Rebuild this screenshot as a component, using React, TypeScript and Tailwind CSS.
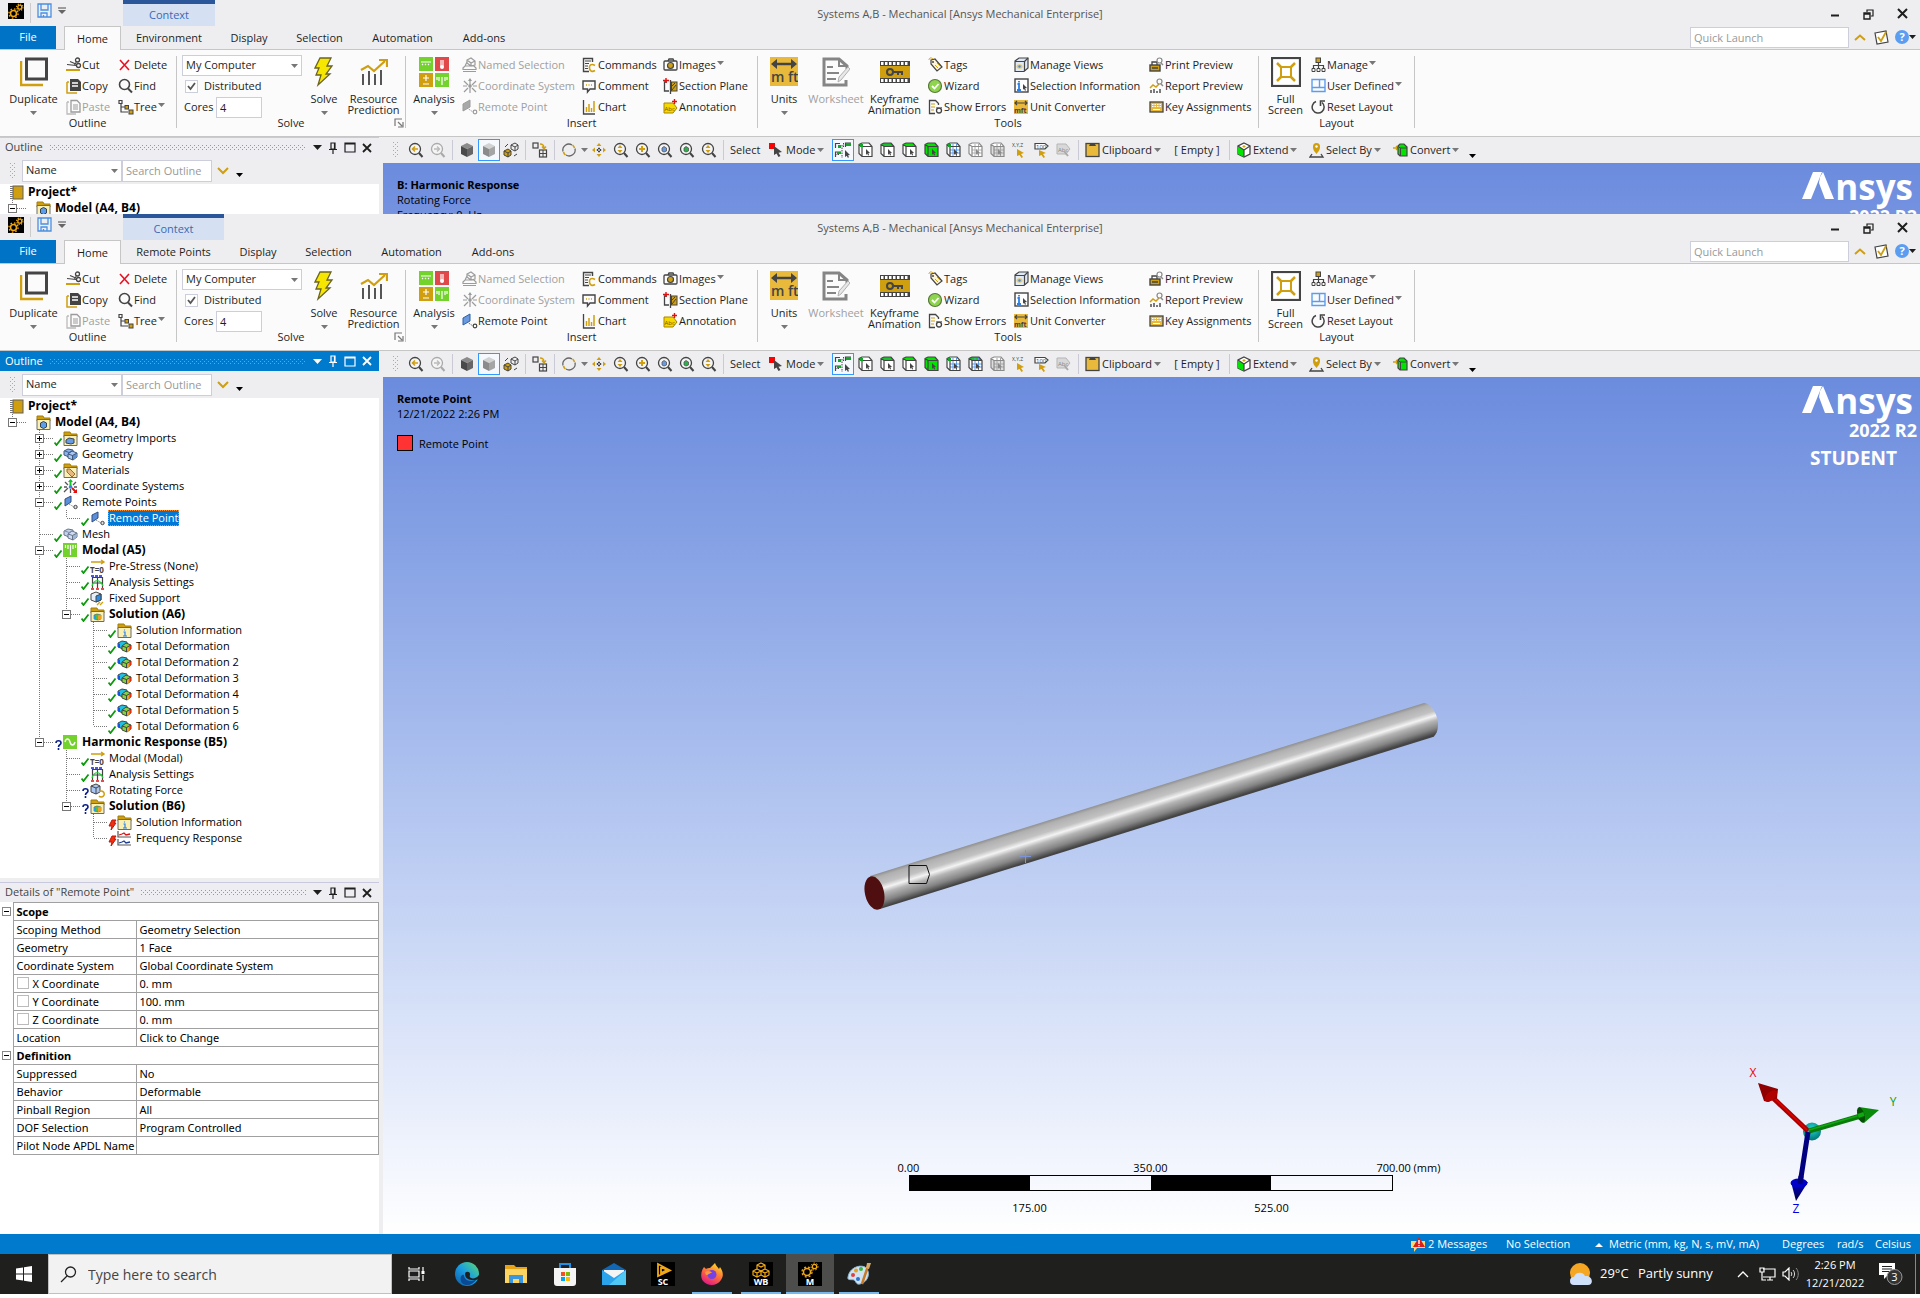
import React from "react";

/* ---------- shared glyphs ---------- */

const K = "#444444";
const G = "#cf9f10";
const D = "#9b9b9b";

type SvgProps = { w?: number; h?: number; vb?: string; className?: string; children: React.ReactNode };

function Svg({ w = 16, h = 16, vb, className = "", children }: SvgProps) {
  return (
    <svg width={w} height={h} viewBox={vb ?? `0 0 ${w} ${h}`} fill="none" aria-hidden="true" className={"shrink-0 " + className}>
      {children}
    </svg>
  );
}

function Caret({ className = "text-[#777]" }: { className?: string }) {
  return (
    <Svg w={7} h={4} className={className}>
      <path d="M0 0h7L3.5 4z" fill="currentColor" />
    </Svg>
  );
}

function Gears({ s = 16 }: { s?: number }) {
  return (
    <Svg w={s} h={s} vb="0 0 16 16">
      <rect width="16" height="16" fill="#000" />
      <circle cx="5.5" cy="10.5" r="3" stroke="#f0a818" strokeWidth="1.6" />
      <circle cx="5.5" cy="10.5" r="4.6" stroke="#f0a818" strokeWidth="1.3" strokeDasharray="1.6 2" />
      <circle cx="11.8" cy="4.2" r="2" stroke="#f0a818" strokeWidth="1.3" />
      <circle cx="11.8" cy="4.2" r="3.2" stroke="#f0a818" strokeWidth="1.1" strokeDasharray="1.2 1.3" />
    </Svg>
  );
}

/* ---------- ribbon icons ---------- */

const ic = {
  cut: (
    <Svg>
      <path d="M0 13h14" stroke={G} strokeWidth="2" />
      <path d="M1 7.500l9 1M4 4.500l7 3" stroke={K} strokeWidth="1.200" />
      <circle cx="11.500" cy="3" r="2" stroke={K} strokeWidth="1.300" />
      <circle cx="12.500" cy="8.500" r="2" stroke={K} strokeWidth="1.300" />
      <path d="M8.500 8l2-3.500" stroke={K} />
    </Svg>
  ),
  copy: (
    <Svg>
      <path d="M1 4v11h10M1 4h2" stroke={G} strokeWidth="1.5" />
      <path d="M5 1h7l3 3v9H4V1z" fill={K} />
      <path d="M6 5h6M6 8h6" stroke="#fff" strokeWidth="1.4" />
    </Svg>
  ),
  paste: (
    <Svg>
      <path d="M1 3v12h9M1 3h2" stroke="#bbb" strokeWidth="1.3" />
      <path d="M5 1.5h6l3 3V13H5z" stroke={D} strokeWidth="1.3" />
      <path d="M7 6h5M7 8h5M7 10h5" stroke={D} />
    </Svg>
  ),
  del: (
    <Svg w={14} h={14}>
      <path d="M2 2l9 10M11 2L2 12" stroke="#e81123" strokeWidth="1.6" />
    </Svg>
  ),
  find: (
    <Svg>
      <circle cx="6.500" cy="6.500" r="5" stroke={K} strokeWidth="1.6" />
      <path d="M10 10.500l4 4" stroke={K} strokeWidth="2" />
    </Svg>
  ),
  tree: (
    <Svg>
      <path d="M1 1.500h3v3H1zM3 5v3h4M3 8v5h7" stroke={K} strokeWidth="1.2" />
      <rect x="7" y="6.500" width="3.500" height="3.500" fill={G} stroke={K} />
      <rect x="11" y="11" width="4" height="4" fill={G} stroke={K} />
    </Svg>
  ),
  namedSel: (
    <Svg>
      <path d="M1 14.500h13M1 11l2-2h9l2 2v1.500H1zM3 9l2-4M5 3l4-2 4 3v4l-4 1-4-3zM5 3l4 3 4-2M9 6v3" stroke={D} strokeWidth="1.2" />
    </Svg>
  ),
  coord: (
    <Svg>
      <path d="M8 1v6M8 9v6M2 3l4 4M14 3l-4 4M2 14l4-4M14 14l-4-4M1 8h4M11 8h4" stroke={D} strokeWidth="1.2" />
      <circle cx="8" cy="8" r="1.800" fill={D} />
      <path d="M6 3l2-3 2 3z" fill={D} />
    </Svg>
  ),
  remoteOff: (
    <Svg>
      <path d="M1 5l7-4v7l-7 4z" fill="#a8a8a8" stroke={D} />
      <path d="M5 9l6 4" stroke={D} strokeDasharray="1.500 1" />
      <circle cx="13" cy="13" r="1.800" stroke={D} strokeWidth="1.200" />
    </Svg>
  ),
  remote: (
    <Svg>
      <path d="M1 5l7-4v7l-7 4z" fill="#6a9be0" stroke="#2f5fa5" />
      <path d="M5 9l6 4" stroke="#666" strokeDasharray="1.500 1" />
      <circle cx="13" cy="13" r="1.800" stroke={K} strokeWidth="1.200" />
    </Svg>
  ),
  commands: (
    <Svg>
      <path d="M7 14.500H1.500v-13h9V5" stroke={K} strokeWidth="1.400" />
      <path d="M3 4h6M3 6.500h4M3 9h3M3 11.500h3" stroke={K} />
      <path d="M13 8.500c-4-2.500-6 0-5.500 3s3 3.500 5.500 2" stroke={G} strokeWidth="1.600" />
    </Svg>
  ),
  comment: (
    <Svg>
      <path d="M1 3h12v8H8L5.500 14v-3H1z" stroke={K} strokeWidth="1.400" />
      <path d="M4 7h1M6.500 7h1M9 7h1" stroke={G} strokeWidth="1.500" />
    </Svg>
  ),
  chart: (
    <Svg>
      <path d="M1.500 1v14H13" stroke={K} strokeWidth="1.300" />
      <path d="M4.500 13V8M7 13V5M9.500 13V9M12 13V2" stroke={G} strokeWidth="1.500" />
    </Svg>
  ),
  images: (
    <Svg>
      <rect x="1" y="4" width="13" height="9" rx="1" stroke={K} strokeWidth="1.300" />
      <path d="M5 4l1-2h4l1 2" stroke={K} strokeWidth="1.300" />
      <circle cx="7.500" cy="8.500" r="3" fill={G} stroke={K} strokeWidth="1.200" />
    </Svg>
  ),
  section: (
    <Svg>
      <path d="M4 4H1.500v9H6M7.500 2v14" stroke={K} strokeWidth="1.300" />
      <rect x="8.500" y="4" width="5.500" height="9" fill={G} stroke={K} />
      <path d="M9 12l4-5M9 8l3-3" stroke={K} />
      <path d="M3 0v5M0 2.500h6" stroke="#e01010" strokeWidth="1.400" />
    </Svg>
  ),
  annotation: (
    <Svg>
      <path d="M1 4h9l4 5-4 5H1z" fill="#f5d800" stroke="#a88400" />
      <text x="1.500" y="12" fontSize="6" fontFamily="Open Sans, sans-serif" fill="#6b5600">Abc</text>
      <path d="M11.500 0v5M9 2.500h5" stroke="#e01010" strokeWidth="1.400" />
    </Svg>
  ),
  tags: (
    <Svg>
      <path d="M3 3l4-1 7 8-5 4-6-7z" fill="#fdf3d8" stroke={K} strokeWidth="1.200" />
      <circle cx="5" cy="5" r="1" fill={K} />
      <path d="M1 3c0-2 2-3 4-1M7 8l3 3M9 6l3 3" stroke={G} />
    </Svg>
  ),
  wizard: (
    <Svg>
      <circle cx="7" cy="8" r="6.500" fill="#8fd44f" stroke="#5a7a3a" strokeWidth="1.200" />
      <path d="M4 8l2.500 2.500L10.500 6" stroke="#fff" strokeWidth="1.800" />
    </Svg>
  ),
  errors: (
    <Svg>
      <path d="M7 14.500H1.500v-13h6l3 3V6" stroke={K} strokeWidth="1.300" />
      <path d="M3 5h4M3 8h4M3 11h3" stroke={G} strokeWidth="1.200" />
      <circle cx="11" cy="11.500" r="2.500" stroke={K} strokeWidth="1.300" />
      <path d="M8.500 8l1.500 1.500M13.500 8l-1 1.500" stroke={K} />
    </Svg>
  ),
  views: (
    <Svg>
      <path d="M1 4l4-3h9v10l-4 3.500H1z" fill="#dfe9f7" stroke={K} strokeWidth="1.200" />
      <path d="M1 4.500h9.500V14M10.500 4.500L14 1" stroke={K} strokeWidth="1.200" />
      <ellipse cx="5.500" cy="9.500" rx="3" ry="2.200" fill="#efc85a" />
      <circle cx="5.500" cy="9.500" r="1.200" fill="#4a8be0" />
    </Svg>
  ),
  selInfo: (
    <Svg>
      <rect x="1" y="1" width="13" height="13" fill="#fff" stroke={K} strokeWidth="1.400" />
      <path d="M5 3v1.500M3.500 6H5v6M3 12h4" stroke="#2a80e8" strokeWidth="1.800" />
      <path d="M9 6l4 4-2 .3 1 2-1 .4-1-2-1 1z" fill={K} />
    </Svg>
  ),
  unitConv: (
    <Svg>
      <rect x="0" y="1" width="14" height="14" fill="#e8b93a" />
      <path d="M1 4h12M3 2L1 4l2 2M11 2l2 2-2 2" stroke={K} strokeWidth="1.200" />
      <text x="0" y="14" fontSize="7" fontWeight="bold" fontFamily="Open Sans, sans-serif" fill={K}>mft</text>
    </Svg>
  ),
  print: (
    <Svg>
      <path d="M3 8V5h5v3" fill="#fff" stroke={K} strokeWidth="1.300" />
      <rect x="1" y="8" width="10" height="6" fill={G} stroke={K} strokeWidth="1.400" />
      <path d="M3 11h6" stroke={K} strokeWidth="1.500" />
      <circle cx="10.500" cy="3.500" r="2.500" fill="#fff" stroke="#888" strokeWidth="1.200" />
      <path d="M12 6l2 2" stroke="#888" strokeWidth="1.400" />
    </Svg>
  ),
  report: (
    <Svg>
      <path d="M2 15v-3M5 15v-4M8 15v-2M11 15v-4" stroke={K} strokeWidth="1.400" />
      <path d="M1 10l3-3 3 2 3-3" stroke={G} strokeWidth="1.500" />
      <circle cx="10.500" cy="3.500" r="2.500" stroke="#888" strokeWidth="1.200" />
      <path d="M12 6l2 2" stroke="#888" strokeWidth="1.400" />
    </Svg>
  ),
  keys: (
    <Svg>
      <rect x="1" y="3" width="13" height="10" fill="#e8b93a" stroke={K} strokeWidth="1.300" />
      <path d="M3 5.500h9M3 7.500h9" stroke="#fff" strokeDasharray="1.500 1" />
      <path d="M4 10.500h7" stroke="#fff" />
    </Svg>
  ),
  manage: (
    <Svg>
      <rect x="5" y="1" width="4.500" height="4.500" fill={G} stroke={K} />
      <path d="M7.500 6v5M2.500 11V8.500h10V11" stroke={K} strokeWidth="1.200" />
      <path d="M1 11.500h3v3H1zM6 11.500h3v3H6zM11 11.500h3v3h-3z" stroke={K} />
    </Svg>
  ),
  userDef: (
    <Svg>
      <path d="M1 1.500h13v12H1zM1 9.500h13M8.500 1.500v8" stroke="#5b9df0" strokeWidth="1.400" />
    </Svg>
  ),
  reset: (
    <Svg>
      <path d="M5 2.500A6 6 0 1 0 11 3.500" stroke={K} strokeWidth="1.500" />
      <path d="M14 2H9.500V7" stroke={K} strokeWidth="1.600" />
    </Svg>
  ),
};

const big = {
  duplicate: (
    <Svg w={28} h={30}>
      <path d="M1 4v24h22" stroke={G} strokeWidth="2.500" />
      <rect x="6.500" y="2" width="20" height="20" stroke={K} strokeWidth="3" />
    </Svg>
  ),
  solve: (
    <Svg w={20} h={30}>
      <path d="M6 1h11l-4 8h5l-6 8h4L4 28l3-10H2l3-7H1z" fill="#f7e600" stroke="#6b6420" strokeWidth="1.300" />
    </Svg>
  ),
  resource: (
    <Svg w={28} h={30}>
      <path d="M3 17v11M9 14v14M15 17v11M21 13v15" stroke={K} strokeWidth="1.800" />
      <path d="M1 13l7-4 6 5 11-10" stroke={G} strokeWidth="2.200" />
      <path d="M19 3h8v7" stroke={G} strokeWidth="2.200" />
    </Svg>
  ),
  analysis: (
    <Svg w={30} h={30}>
      <rect width="14" height="14" fill="#74d22c" />
      <rect x="16" width="14" height="14" fill="#e0484a" />
      <rect y="16" width="14" height="14" fill="#cf9f10" />
      <rect x="16" y="16" width="14" height="14" fill="#74d22c" />
      <path d="M2 5h10M3 7l1 1M6 7l1 1M9 7l1 1M22 3v7M24 3v7M20 20v4M18 20v3M23 20v8M26 20v4M28 20v3M4 21h6M7 18v6M4 27h6" stroke="#fff" strokeWidth="1.200" />
      <circle cx="23" cy="10" r="2" fill="#fff" />
    </Svg>
  ),
  units: (
    <Svg w={28} h={30}>
      <rect width="28" height="29" fill="#e8b93a" />
      <path d="M3 7h22" stroke={K} strokeWidth="2.500" />
      <path d="M1 7l6-5v10zM27 7l-6-5v10z" fill={K} />
      <text x="1" y="25" fontSize="14" fontWeight="600" fontFamily="Open Sans, sans-serif" fill={K}>m ft</text>
    </Svg>
  ),
  worksheet: (
    <Svg w={28} h={30}>
      <path d="M25 12V9l-8-7H2v26h22v-5" stroke="#858585" strokeWidth="3" />
      <path d="M17 2v7h8M5 10h6M5 16h12M5 22h9" stroke="#858585" strokeWidth="2" />
      <path d="M16 25l1-5 9-10 2 2-9 11z" fill="#e8e8e8" stroke="#b0b0b0" />
    </Svg>
  ),
  keyframe: (
    <Svg w={30} h={30}>
      <rect y="4" width="30" height="22" fill={K} />
      <rect x="0" y="9" width="30" height="12" fill={G} />
      <path d="M1 6.500h28M1 23.500h28" stroke="#fff" strokeWidth="3" strokeDasharray="2.500 1.500" />
      <circle cx="10" cy="15" r="3" stroke={K} strokeWidth="2" />
      <path d="M13 15h10M18 15v3M22 15v3" stroke={K} strokeWidth="2" />
    </Svg>
  ),
  full: (
    <Svg w={30} h={30}>
      <rect x="1" y="1" width="28" height="28" fill="#fff" stroke={K} strokeWidth="2.200" />
      <rect x="10" y="10" width="10" height="10" stroke={G} strokeWidth="2" />
      <path d="M6 6l5 5M24 6l-5 5M6 24l5-5M24 24l-5-5" stroke={G} strokeWidth="2.500" />
    </Svg>
  ),
};

/* ---------- graphics toolbar icons ---------- */

function Lens({ c = K, children }: { c?: string; children?: React.ReactNode }) {
  return (
    <Svg>
      <circle cx="7" cy="7" r="5.500" fill="#f5f5f5" stroke={c} strokeWidth="1.300" />
      <path d="M11 11l3.500 4" stroke={c} strokeWidth="2" />
      {children}
    </Svg>
  );
}

function Box3({ top = "#fff", front = "#fff", c = K, dot, mesh }: { top?: string; front?: string; c?: string; dot?: boolean; mesh?: string }) {
  return (
    <Svg>
      <path d="M1 2.500L4 1h7l3 3.500-10 0z" fill={top} />
      <path d="M4 4.500h10v10H4z" fill={front} />
      <path d="M1 2.500l3 2v10l-3-3z" fill={front} />
      {mesh && <path d="M7 2v13M10.500 2v13M4 8h10M4 11h10" stroke={mesh} />}
      <path d="M1 2.500L4 1h7l3 3.500v10H4l-3-3zM1 2.500l3 2h10M4 4.500v10" stroke={c} strokeWidth="1.200" />
      {dot && <path d="M2 2h3v3H2z" fill="#17a32b" />}
      <path d="M8 7l4 4-1.700.2.800 1.800-1 .5-.9-1.900L8 13z" fill={c} />
    </Svg>
  );
}

function SolidCube({ a, b, c }: { a: string; b: string; c: string }) {
  return (
    <Svg>
      <path d="M8 1l6 3-6 3-6-3z" fill={a} />
      <path d="M2 4l6 3v8l-6-3z" fill={b} />
      <path d="M14 4l-6 3v8l6-3z" fill={c} />
    </Svg>
  );
}

const tb = {
  back: <Lens><path d="M10 7H5M7 4.500L4.500 7 7 9.500" stroke={G} strokeWidth="1.600" /></Lens>,
  fwd: <Lens c="#aaa"><path d="M4 7h5M7 4.500L9.500 7 7 9.500" stroke="#bbb" strokeWidth="1.400" /></Lens>,
  cubeEdge: <SolidCube a="#8b8b8b" b="#4a4a4a" c="#666" />,
  cube: <SolidCube a="#d2d2d2" b="#8b8b8b" c="#a5a5a5" />,
  swap: (
    <Svg>
      <path d="M8 3l4-2 3 2v4l-3 2-4-2zM8 3l4 2 3-2M12 5v4" stroke={K} />
      <path d="M1 9l4-2 3 2v4l-3 2-4-2z" fill={G} stroke={K} />
      <path d="M1 9l4 2 3-2M5 11v4M2 5l3-3M11 14l3-2" stroke={K} />
    </Svg>
  ),
  viewports: (
    <Svg>
      <rect x="1" y="1" width="5" height="5" stroke={K} strokeWidth="1.200" />
      <rect x="7.500" y="8" width="7" height="7" stroke={K} strokeWidth="1.200" />
      <path d="M11 8v7M7.500 11.500h7" stroke={K} />
      <path d="M8 2c3 0 4 1 4 4M10 4.500L12 7l2-2.500" stroke={G} strokeWidth="1.300" />
    </Svg>
  ),
  rotate: (
    <Svg>
      <path d="M2 9.500a6 6 0 0 1 9-6.500M14 6.500a6 6 0 0 1-9 6.500" stroke="#666" strokeWidth="1.300" />
      <path d="M11.500 3a6 6 0 0 1 2 3M2.500 10a6 6 0 0 0 2 3" stroke={G} strokeWidth="1.600" />
    </Svg>
  ),
  pan: (
    <Svg>
      <path d="M8 1l2.500 3h-5zM8 15l2.500-3h-5zM1 8l3-2.500v5zM15 8l-3-2.500v5z" fill={G} />
      <path d="M7 6.500h2M7 9.500h2M6.500 7v2M9.500 7v2" stroke={K} strokeWidth="1.400" />
    </Svg>
  ),
  zoom: <Lens><path d="M4.500 6L7 3l2.500 3zM4.500 8L7 11l2.500-3z" fill={G} /></Lens>,
  zoomIn: <Lens><path d="M7 4v6M4 7h6" stroke={G} strokeWidth="2" /></Lens>,
  fit: <Lens><path d="M5 6l2-1.500L9.500 6v3L7 10 5 9z" fill="#6a9be0" stroke="#555" strokeWidth=".8" /></Lens>,
  fitSel: <Lens><path d="M5 6l2-1.500L9.500 6v3L7 10 5 9z" fill="#2bb14a" stroke="#555" strokeWidth=".8" /></Lens>,
  mode: (
    <Svg>
      <rect x="0" y="1" width="6" height="6" fill="#f00" />
      <path d="M5 4l8 6-3.500.7 2 3.300-2 1-2-3.500L5 13z" fill={K} />
    </Svg>
  ),
  smart: (
    <Svg w={18} h={18}>
      <path d="M1.500 7V2.500H6M11.500 6V2H17M1.500 16V11H7" stroke={K} strokeWidth="1.200" />
      <path d="M4 4h3v3H4zM12 2h5v3h-5zM3 11h4v2H3z" fill="#17a32b" />
      <path d="M9.500 2v5M1 13.500h5M8 4v13" stroke={K} strokeDasharray="1.500 1" />
      <path d="M11 9l5 5-2 .2 1 2-1.200.6-1-2-1.800 1.200z" fill={K} />
    </Svg>
  ),
  xyz: (
    <Svg>
      <text x="0" y="5" fontSize="5" fontFamily="Open Sans, sans-serif" fill={K}>X,Y,Z</text>
      <path d="M5 7l7 4-3 1 2 3-1.500 1-2-3L5 14z" fill={G} />
    </Svg>
  ),
  id100: (
    <Svg>
      <path d="M1 1.500h10l3 2.500-3 3H1z" fill="#fff" stroke={K} strokeWidth="1.200" />
      <text x="2" y="6.500" fontSize="6" fontFamily="Open Sans, sans-serif" fill={K}>100</text>
      <path d="M5 8l7 3-3 1 2 3-1.500 1-2-3L5 14z" fill={G} />
    </Svg>
  ),
  abcOff: (
    <Svg>
      <path d="M1 2h9l4 5-4 5H1z" fill="#d8d8d8" stroke="#b5b5b5" />
      <text x="2" y="9.500" fontSize="6" fontFamily="Open Sans, sans-serif" fill="#888">Abc</text>
      <path d="M8 9l4 5" stroke="#aaa" strokeWidth="2" />
    </Svg>
  ),
  clipboard: (
    <Svg>
      <rect x="1" y="1.500" width="13" height="13" fill="#e8b93a" stroke={K} strokeWidth="1.300" />
      <path d="M4 4l1.500-3h4L11 4z" fill={K} />
    </Svg>
  ),
  extend: (
    <Svg>
      <path d="M8 1l6 3v8l-6 3-6-3V4z" fill="#fff" stroke={K} strokeWidth="1.300" />
      <path d="M2 4.500L8 8v7l-6-3z" fill="#00e400" />
      <path d="M2 4l6 4 6-4M8 8v7" stroke={K} strokeWidth="1.200" />
      <path d="M8 3v3M6.500 4.500h3" stroke={G} />
    </Svg>
  ),
  selectBy: (
    <Svg>
      <path d="M7.500 12C4 8 4 6.500 4 4.500a3.500 3.500 0 0 1 7 0c0 2 0 3.500-3.500 7.500z" fill={G} />
      <circle cx="7.500" cy="4.500" r="1.200" fill="#fff" />
      <path d="M3 12l-2 3h13l-2-3" stroke={K} strokeWidth="1.300" />
    </Svg>
  ),
  convert: (
    <Svg>
      <path d="M0 6h4M3 4l2 2-2 2" stroke={G} strokeWidth="1.300" />
      <path d="M5 4l2-2h4l3 3v9H7l-2-2z" fill="#00e400" stroke={K} strokeWidth="1.200" />
      <path d="M5 4l2 2h7M7.500 6v8" stroke={K} />
    </Svg>
  ),
};

/* ---------- tree icons ---------- */

function Folder({ children }: { children: React.ReactNode }) {
  return (
    <Svg w={15} h={15}>
      <path d="M1 3V1h6l1 2h6v3H1z" fill={G} stroke="#a07c10" />
      <path d="M1 4.500h13v10H1z" fill="#fbf0b4" stroke="#6b6b6b" />
      {children}
    </Svg>
  );
}

function Blocks({ a, b, c, d, s = K }: { a: string; b: string; c: string; d: string; s?: string }) {
  return (
    <Svg w={15} h={15}>
      <path d="M1 4l4-2 5 1v4l-4 3-5-2z" fill={a} stroke={s} />
      <path d="M5 7l4-3 5 2v4l-4 3-5-2z" fill={b} stroke={s} />
      <path d="M9.500 8.500l4-2.500v4l-4 3z" fill={c} />
      <path d="M2 4l4 1.500L9 4" stroke={d} />
      <path d="M5 7l4.500 1.500L14 6M9.500 8.500V13" stroke={s} />
    </Svg>
  );
}

const ti: Record<string, React.ReactNode> = {
  project: (
    <Svg w={15} h={15}>
      <rect x="4" y="1" width="10" height="13" fill={G} stroke="#5f5f5f" />
      <path d="M2.500 1v13" stroke="#777" strokeWidth="3" strokeDasharray="1 1" />
    </Svg>
  ),
  model: <Folder><path d="M4.500 8l3-1.500 3 1.500v4l-3 1.500-3-1.500z" fill="#5b9df0" stroke="#345" /></Folder>,
  imports: <Folder><path d="M3 9l3-2 5 1v4l-3 1-5-1z" fill="#6a9be0" stroke="#345" /></Folder>,
  geometry: <Blocks a="#8db4ea" b="#a9c7f2" c="#5b8fd8" d="#345f9a" s="#3d5878" />,
  materials: <Folder><path d="M4 6l3 0 5 5-3 3-5-5z" fill="#e6b980" stroke="#a06a2a" /></Folder>,
  coords: (
    <Svg w={15} h={15}>
      <path d="M7.500 7V1" stroke="#17c32b" strokeWidth="2" />
      <path d="M5 3l2.500-3L10 3z" fill="#17c32b" />
      <path d="M9 9l4 4" stroke="#e01010" strokeWidth="2" />
      <path d="M14 14v-4l-4 4z" fill="#e01010" />
      <path d="M5 9l-4 4M2 3l3 3M13 3l-3 3M7.500 10v4M1 8h3M11 8h3" stroke="#555" strokeWidth="1.300" />
      <circle cx="7.500" cy="8" r="1.800" fill="#3b82e8" />
    </Svg>
  ),
  remote: (
    <Svg w={15} h={15}>
      <path d="M2 4l6-3v6l-6 4z" fill="#5b8fd8" stroke="#2f4f85" />
      <path d="M6 9l5 3" stroke="#777" strokeDasharray="1 1" />
      <circle cx="12.500" cy="12" r="1.700" fill="#ddd" stroke={K} />
    </Svg>
  ),
  mesh: <Blocks a="#c4d3ea" b="#cfdcf0" c="#9fb6d8" d="#7d8fae" s="#66758c" />,
  modal: (
    <Svg w={15} h={15}>
      <rect width="14" height="14" fill="#74d22c" />
      <path d="M2.500 2v3M5 2v4M7.500 2v10M10 2v4M12.500 2v3" stroke="#fff" strokeWidth="1.200" />
    </Svg>
  ),
  t0: (
    <Svg w={16} h={15}>
      <path d="M1 3h12M11 1l3 2-3 2" stroke={G} strokeWidth="1.400" />
      <text x="0" y="14" fontSize="8" fontWeight="bold" fontFamily="Open Sans, sans-serif" fill={K}>T=0</text>
    </Svg>
  ),
  settings: (
    <Svg w={16} h={15}>
      <path d="M2.500 2v11M7.500 2v11M12.500 2v11M2 2.500h11M2 8h11" stroke={K} strokeWidth="1.200" />
      <path d="M2 11c2-7 8-7 11 0" stroke="#17d32b" strokeWidth="1.200" />
      <path d="M1 1h12" stroke="#1020e0" strokeWidth="1.600" strokeDasharray="3 1" />
      <path d="M1 14h13" stroke="#e01010" strokeWidth="1.600" strokeDasharray="3 2" />
    </Svg>
  ),
  support: (
    <Svg w={15} h={15}>
      <path d="M1 3l5-2 5 2v6l-5 2-5-2z" fill="#e8eef8" stroke={K} />
      <path d="M6 5l5-2v6l-5 2z" fill="#2a8be8" stroke={K} />
      <path d="M7 14l3-3M10 14l3-3" stroke={G} strokeWidth="1.300" />
    </Svg>
  ),
  solution: (
    <Folder>
      <path d="M4 8l3-1 4 1v4l-3 1-4-1z" fill="#4ec04a" stroke="#555" strokeWidth=".6" />
      <path d="M8 8.500l3-.5v4l-3 1z" fill="#f0a020" />
      <path d="M4 8.500h2v3.500H4z" fill="#2a9be8" />
    </Folder>
  ),
  info: <Folder><path d="M7.500 6.500v1M6.500 9h1.500v4M6 13h4" stroke="#2a80e8" strokeWidth="1.200" /></Folder>,
  deform: (
    <Svg w={15} h={15}>
      <path d="M1 4l4-2 5 1v4l-4 3-5-2z" fill="#22c0e0" stroke={K} />
      <path d="M1 4l2 1v4l-2-1z" fill="#2050e0" />
      <path d="M5 7l4-3 5 2v4l-4 3-5-2z" fill="#7ed63a" stroke={K} />
      <path d="M10 8.500L14 6v4l-4 3z" fill="#f0a020" />
      <path d="M12.500 7L14 6v4l-1.500 1z" fill="#e03010" />
      <path d="M5 7l4.500 1.500L14 6M9.500 8.500V13" stroke={K} />
    </Svg>
  ),
  harmonic: (
    <Svg w={15} h={15}>
      <rect width="14" height="14" fill="#74d22c" />
      <path d="M2 7c1-4 4-4 5 0s4 4 5 0" stroke="#fff" strokeWidth="1.400" />
    </Svg>
  ),
  rotating: (
    <Svg w={15} h={15}>
      <path d="M1 3l5-2 4 2v6l-4 2-5-2z" fill="#a9c7f2" stroke={K} />
      <path d="M1 3l5 2 4-2M6 5v6" stroke={K} />
      <path d="M9 9a3 3 0 1 1 0 4" stroke={G} strokeWidth="1.500" />
    </Svg>
  ),
  freq: (
    <Svg w={15} h={15}>
      <path d="M1 0v6h13M1 8v6h13" stroke="#555" strokeWidth="1.200" />
      <path d="M2 4l3-1 2-1 2 2 4-1" stroke="#e01010" strokeWidth="1.300" />
      <path d="M2 12l3-1 2-1 2 2 4-1" stroke="#1b3f9a" strokeWidth="1.300" />
    </Svg>
  ),
};

const marks: Record<string, React.ReactNode> = {
  ok: <Svg w={9} h={16}><path d="M0.500 12.500l2 2.500L7.500 8.500" stroke="#0a9a0a" strokeWidth="1.800" /></Svg>,
  q: <Svg w={9} h={16}><path d="M2 9c0-3 5-3 5 0 0 2-2.500 1.500-2.500 4M4.500 14v2" stroke="#0b1f8c" strokeWidth="1.600" /></Svg>,
  bolt: <Svg w={9} h={16}><path d="M4 6h4L6 9h2l-5 7 1-4H1z" fill="#f03010" stroke="#c01808" /></Svg>,
  none: <span className="w-[9px] shrink-0" />,
};

/* ---------- outline tree ---------- */

type Node = { d: number; label: string; icon: string; mark?: string; box?: "+" | "-"; bold?: boolean; sel?: boolean; g: string };

/* g holds one character per column: "|" passes through, "T" branches, "L" ends, "." is blank */
const nodes: Node[] = [
  { d: -1, label: "Project*", icon: "project", bold: true, g: "" },
  { d: 0, label: "Model (A4, B4)", icon: "model", box: "-", bold: true, g: "L" },
  { d: 1, label: "Geometry Imports", icon: "imports", mark: "ok", box: "+", g: ".T" },
  { d: 1, label: "Geometry", icon: "geometry", mark: "ok", box: "+", g: ".T" },
  { d: 1, label: "Materials", icon: "materials", mark: "ok", box: "+", g: ".T" },
  { d: 1, label: "Coordinate Systems", icon: "coords", mark: "ok", box: "+", g: ".T" },
  { d: 1, label: "Remote Points", icon: "remote", mark: "ok", box: "-", g: ".T" },
  { d: 2, label: "Remote Point", icon: "remote", mark: "ok", sel: true, g: ".|L" },
  { d: 1, label: "Mesh", icon: "mesh", mark: "ok", g: ".T" },
  { d: 1, label: "Modal (A5)", icon: "modal", mark: "ok", box: "-", bold: true, g: ".T" },
  { d: 2, label: "Pre-Stress (None)", icon: "t0", mark: "ok", g: ".|T" },
  { d: 2, label: "Analysis Settings", icon: "settings", mark: "ok", g: ".|T" },
  { d: 2, label: "Fixed Support", icon: "support", mark: "ok", g: ".|T" },
  { d: 2, label: "Solution (A6)", icon: "solution", mark: "ok", box: "-", bold: true, g: ".|L" },
  { d: 3, label: "Solution Information", icon: "info", mark: "ok", g: ".|.T" },
  { d: 3, label: "Total Deformation", icon: "deform", mark: "ok", g: ".|.T" },
  { d: 3, label: "Total Deformation 2", icon: "deform", mark: "ok", g: ".|.T" },
  { d: 3, label: "Total Deformation 3", icon: "deform", mark: "ok", g: ".|.T" },
  { d: 3, label: "Total Deformation 4", icon: "deform", mark: "ok", g: ".|.T" },
  { d: 3, label: "Total Deformation 5", icon: "deform", mark: "ok", g: ".|.T" },
  { d: 3, label: "Total Deformation 6", icon: "deform", mark: "ok", g: ".|.L" },
  { d: 1, label: "Harmonic Response (B5)", icon: "harmonic", mark: "q", box: "-", bold: true, g: ".L" },
  { d: 2, label: "Modal (Modal)", icon: "t0", mark: "ok", g: "..T" },
  { d: 2, label: "Analysis Settings", icon: "settings", mark: "ok", g: "..T" },
  { d: 2, label: "Rotating Force", icon: "rotating", mark: "q", g: "..T" },
  { d: 2, label: "Solution (B6)", icon: "solution", mark: "q", box: "-", bold: true, g: "..L" },
  { d: 3, label: "Solution Information", icon: "info", mark: "bolt", g: "...T" },
  { d: 3, label: "Frequency Response", icon: "freq", mark: "bolt", g: "...L" },
];

function Guide({ kind, box }: { kind: string; box?: "+" | "-" }) {
  return (
    <Svg w={27} h={16}>
      {kind !== "." && <path d={kind === "L" ? "M12.500 0v8" : "M12.500 0v16"} stroke="#777" strokeDasharray="1 1" />}
      {(kind === "T" || kind === "L") && <path d="M13 8.500h14" stroke="#777" strokeDasharray="1 1" />}
      {box && (
        <>
          <rect x="8.500" y="4.500" width="8" height="8" fill="#fff" stroke="#777" />
          <path d={box === "+" ? "M10 8.500h5M12.500 6v5" : "M10 8.500h5"} stroke="#000" />
        </>
      )}
    </Svg>
  );
}

function Tree({ items }: { items: Node[] }) {
  return (
    <ul className="min-h-0 flex-1 overflow-hidden bg-white leading-[16px] text-black">
      {items.map((n, i) => (
        <li key={i} className="flex h-4 items-center whitespace-nowrap">
          {n.g.split("").map((k, j) => (
            <Guide key={j} kind={k} box={j === n.g.length - 1 ? n.box : undefined} />
          ))}
          {marks[n.mark ?? "none"]}
          <span className="flex w-[18px] shrink-0">{ti[n.icon]}</span>
          <button
            type="button"
            className={
              (n.bold ? "text-[12px] font-bold " : "text-[11px] ") +
              (n.sel ? "bg-[#0078d7] px-px text-white outline-1 -outline-offset-1 outline-dotted outline-[#ff8a28]" : "px-px")
            }
          >
            {n.label}
          </button>
        </li>
      ))}
    </ul>
  );
}

/* ---------- panels ---------- */

function PanelHeader({ title, active }: { title: string; active?: boolean }) {
  return (
    <header
      className={
        "flex h-5 shrink-0 items-center gap-[7px] pr-[7px] pl-[5px] text-[11px] " +
        (active ? "bg-[#007acc] text-white" : "border-t border-[#c8c9de] bg-[#eeeef2] text-[#444]")
      }
    >
      <h2 className="shrink-0">{title}</h2>
      <span
        className={
          "h-[5px] flex-1 bg-[length:4px_4px] bg-[position:0_0,2px_2px] " +
          (active
            ? "bg-[conic-gradient(at_1px_1px,transparent_75%,#59a8de_0),conic-gradient(at_1px_1px,transparent_75%,#59a8de_0)]"
            : "bg-[conic-gradient(at_1px_1px,transparent_75%,#999_0),conic-gradient(at_1px_1px,transparent_75%,#999_0)]")
        }
      />
      <span className={"flex items-center gap-[6px] " + (active ? "text-white" : "text-[#1e1e1e]")}>
        <button type="button" aria-label="Panel menu">
          <Svg w={9} h={5}><path d="M0 0h9L4.500 5z" fill="currentColor" /></Svg>
        </button>
        <button type="button" aria-label="Pin">
          <Svg w={10} h={12}><path d="M3 1h4v6H3zM1 7.500h8M5 8v4M6.500 1v6" stroke="currentColor" strokeWidth="1.200" /></Svg>
        </button>
        <button type="button" aria-label="Maximize">
          <Svg w={12} h={11}><path d="M1 1h10v9H1zM1 2h10" stroke="currentColor" strokeWidth="1.200" /></Svg>
        </button>
        <button type="button" aria-label="Close">
          <Svg w={10} h={10}><path d="M1 1l8 8M9 1L1 9" stroke="currentColor" strokeWidth="1.800" /></Svg>
        </button>
      </span>
    </header>
  );
}

function Grip() {
  return (
    <span className="h-4 w-[5px] shrink-0 bg-[conic-gradient(at_1px_1px,transparent_75%,#aaa_0),conic-gradient(at_1px_1px,transparent_75%,#aaa_0)] bg-[length:4px_4px] bg-[position:0_0,2px_2px]" />
  );
}

const scope: [string, string, boolean?][] = [
  ["Scoping Method", "Geometry Selection"],
  ["Geometry", "1 Face"],
  ["Coordinate System", "Global Coordinate System"],
  ["X Coordinate", "0. mm", true],
  ["Y Coordinate", "100. mm", true],
  ["Z Coordinate", "0. mm", true],
  ["Location", "Click to Change"],
];
const definition: [string, string, boolean?][] = [
  ["Suppressed", "No"],
  ["Behavior", "Deformable"],
  ["Pinball Region", "All"],
  ["DOF Selection", "Program Controlled"],
  ["Pilot Node APDL Name", ""],
];

function DetailRows({ title, rows }: { title: string; rows: [string, string, boolean?][] }) {
  return (
    <tbody>
      <tr className="h-[18px]">
        <td className="w-[13px] p-0">
          <button type="button" aria-label={"Collapse " + title} className="flex pl-[2px]">
            <Svg w={9} h={9}>
              <rect x=".5" y=".5" width="8" height="8" fill="#fff" stroke="#888" />
              <path d="M2 4.500h5" stroke="#000" />
            </Svg>
          </button>
        </td>
        <th colSpan={2} scope="colgroup" className="border border-[#a0a0a0] pt-0 pb-px pl-[3px] text-left font-bold">{title}</th>
      </tr>
      {rows.map(([k, v, check]) => (
        <tr key={k} className="h-[18px]">
          <td className="p-0" />
          <th scope="row" className="w-[123px] border border-[#a0a0a0] pt-0 pb-px pl-[3px] text-left font-normal whitespace-nowrap">
            {check ? (
              <label className="flex items-center gap-1">
                <input type="checkbox" className="size-3 appearance-none border border-[#bbb] bg-white" />
                {k}
              </label>
            ) : (
              k
            )}
          </th>
          <td className="border border-[#a0a0a0] pt-0 pb-px pl-[3px]">{v}</td>
        </tr>
      ))}
    </tbody>
  );
}

function Details() {
  return (
    <section className="mt-1 h-[352px] shrink-0 bg-white">
      <PanelHeader title={'Details of "Remote Point"'} />
      <table className="w-full border-collapse font-['Noto_Sans','Open_Sans',sans-serif] text-[11px] leading-[15px] text-black">
        <DetailRows title="Scope" rows={scope} />
        <DetailRows title="Definition" rows={definition} />
      </table>
    </section>
  );
}

/* ---------- ribbon ---------- */

function Cmd({ icon, label, off, menu }: { icon: React.ReactNode; label: string; off?: boolean; menu?: boolean }) {
  return (
    <button type="button" disabled={off} className={"flex h-[21px] items-center pb-px whitespace-nowrap " + (off ? "text-[#a0a0a0]" : "")}>
      <span className="flex w-4 shrink-0">{icon}</span>
      {label}
      {menu && <span className="mb-1 ml-px"><Caret /></span>}
    </button>
  );
}

function BigCmd({ icon, lines, menu, off, w }: { icon: React.ReactNode; lines: string[]; menu?: boolean; off?: boolean; w: string }) {
  return (
    <button type="button" disabled={off} className={"flex flex-col items-center justify-start leading-[11px] " + w + (off ? " text-[#a0a0a0]" : "")}>
      <span className="flex h-[38px] items-start pt-[2px]">{icon}</span>
      {lines.map((l) => (
        <span key={l} className="whitespace-nowrap">{l}</span>
      ))}
      {menu && <span className="mt-[7px] flex"><Caret /></span>}
    </button>
  );
}

function Group({ label, w, children, launcher }: { label: string; w: string; children: React.ReactNode; launcher?: boolean }) {
  return (
    <div role="group" aria-label={label} className={"flex shrink-0 flex-col " + w}>
      <div className="flex h-[63px]">{children}</div>
      <div className="flex h-[10px] items-center justify-center leading-[10px]">
        <span className="flex-1" />
        {label}
        <span className="flex flex-1 justify-end">
          {launcher && (
            <Svg w={11} h={10}>
              <path d="M1 8V1h7M4 4l4 4M9 4v5H4" stroke="#777" strokeWidth="1.200" />
            </Svg>
          )}
        </span>
      </div>
    </div>
  );
}

function Rule() {
  return <span className="mt-px mb-2 w-px shrink-0 bg-[#c6c6c6]" />;
}

function Ribbon({ remoteOn, id }: { remoteOn: boolean; id: string }) {
  return (
    <div className="flex h-[87px] shrink-0 overflow-hidden border-b border-[#c6c6c6] bg-[#fbfbfb] pt-[5px]">
      <Group label="Outline" w="w-[176px] pr-px">
        <BigCmd icon={big.duplicate} lines={["Duplicate"]} menu w="ml-[3px] w-[61px]" />
        <div className="w-[54px] pl-[2px]">
          <Cmd icon={ic.cut} label="Cut" />
          <Cmd icon={ic.copy} label="Copy" />
          <Cmd icon={ic.paste} label="Paste" off />
        </div>
        <div>
          <Cmd icon={ic.del} label="Delete" />
          <Cmd icon={ic.find} label="Find" />
          <Cmd icon={ic.tree} label="Tree" menu />
        </div>
      </Group>
      <Rule />
      <Group label="Solve" w="w-[228px]" launcher>
        <div className="flex w-[129px] flex-col pl-[5px]">
          <div className="grid h-[21px] w-[120px] items-center">
            <select aria-label="Compute target" className="col-start-1 row-start-1 h-[21px] appearance-none border border-[#ccceDB] bg-white pl-[3px]">
              <option>My Computer</option>
            </select>
            <span className="pointer-events-none col-start-1 row-start-1 mr-1 justify-self-end"><Caret /></span>
          </div>
          <label className="flex h-[21px] items-center gap-[6px] pl-[3px]">
            <span className="grid size-[13px] place-items-center">
              <input type="checkbox" defaultChecked className="col-start-1 row-start-1 size-[13px] appearance-none border border-[#ccceDB] bg-white" />
              <Svg w={9} h={9} className="pointer-events-none col-start-1 row-start-1">
                <path d="M1 4l2.500 3L8 1" stroke="#555" strokeWidth="1.800" />
              </Svg>
            </span>
            Distributed
          </label>
          <div className="flex h-[21px] items-center pl-[2px]">
            <label htmlFor={id + "-cores"} className="w-8">Cores</label>
            <input id={id + "-cores"} type="text" defaultValue="4" className="h-[21px] w-[46px] border border-[#ccceDB] bg-white pl-[3px]" />
          </div>
        </div>
        <BigCmd icon={big.solve} lines={["Solve"]} menu w="w-9" />
        <BigCmd icon={big.resource} lines={["Resource", "Prediction"]} w="w-[63px]" />
      </Group>
      <Rule />
      <Group label="Insert" w="w-[351px]">
        <BigCmd icon={big.analysis} lines={["Analysis"]} menu w="w-[56px]" />
        <div className="w-[120px]">
          <Cmd icon={ic.namedSel} label="Named Selection" off />
          <Cmd icon={ic.coord} label="Coordinate System" off />
          <Cmd icon={remoteOn ? ic.remote : ic.remoteOff} label="Remote Point" off={!remoteOn} />
        </div>
        <div className="w-[81px]">
          <Cmd icon={ic.commands} label="Commands" />
          <Cmd icon={ic.comment} label="Comment" />
          <Cmd icon={ic.chart} label="Chart" />
        </div>
        <div>
          <Cmd icon={ic.images} label="Images" menu />
          <Cmd icon={ic.section} label="Section Plane" />
          <Cmd icon={ic.annotation} label="Annotation" />
        </div>
      </Group>
      <Rule />
      <Group label="Tools" w="w-[500px]">
        <BigCmd icon={big.units} lines={["Units"]} menu w="ml-px w-[50px]" />
        <BigCmd icon={big.worksheet} lines={["Worksheet"]} off w="w-[54px]" />
        <BigCmd icon={big.keyframe} lines={["Keyframe", "Animation"]} w="w-[63px]" />
        <div className="w-[88px] pl-[2px]">
          <Cmd icon={ic.tags} label="Tags" />
          <Cmd icon={ic.wizard} label="Wizard" />
          <Cmd icon={ic.errors} label="Show Errors" />
        </div>
        <div className="w-[135px]">
          <Cmd icon={ic.views} label="Manage Views" />
          <Cmd icon={ic.selInfo} label="Selection Information" />
          <Cmd icon={ic.unitConv} label="Unit Converter" />
        </div>
        <div>
          <Cmd icon={ic.print} label="Print Preview" />
          <Cmd icon={ic.report} label="Report Preview" />
          <Cmd icon={ic.keys} label="Key Assignments" />
        </div>
      </Group>
      <Rule />
      <Group label="Layout" w="w-[155px]">
        <BigCmd icon={big.full} lines={["Full", "Screen"]} w="ml-px w-[51px]" />
        <div>
          <Cmd icon={ic.manage} label="Manage" menu />
          <Cmd icon={ic.userDef} label="User Defined" menu />
          <Cmd icon={ic.reset} label="Reset Layout" />
        </div>
      </Group>
      <Rule />
    </div>
  );
}

/* ---------- graphics toolbar ---------- */

function Tool({ icon, name, on }: { icon: React.ReactNode; name: string; on?: boolean }) {
  return (
    <button type="button" aria-label={name} className={"flex h-[22px] w-[22px] shrink-0 items-center justify-center " + (on ? "border border-[#3399ff] bg-[#f5f9fe]" : "")}>
      {icon}
    </button>
  );
}

function Sep() {
  return <span className="mx-[3px] h-5 w-px shrink-0 bg-[#c9cad6]" />;
}

function ToolMenu({ icon, label, w }: { icon: React.ReactNode; label: string; w: string }) {
  return (
    <button type="button" className={"flex shrink-0 items-center gap-px pl-[3px] whitespace-nowrap " + w}>
      {icon}
      {label}
      <span className="ml-px"><Caret /></span>
    </button>
  );
}

function GraphicsToolbar({ elementFaces }: { elementFaces: boolean }) {
  return (
    <div role="toolbar" aria-label="Graphics" className="flex h-[26px] shrink-0 items-center overflow-hidden bg-[#eeeef0] pl-[10px] text-[11px] text-[#1e1e1e]">
      <Grip />
      <span className="ml-[7px] flex items-center">
        <Tool icon={tb.back} name="Previous view" />
        <Tool icon={tb.fwd} name="Next view" />
      </span>
      <Sep />
      <Tool icon={tb.cubeEdge} name="Shaded with edges" />
      <Tool icon={tb.cube} name="Shaded" on />
      <Tool icon={tb.swap} name="Show hidden" />
      <Sep />
      <Tool icon={tb.viewports} name="Viewports" />
      <Sep />
      <span className="flex items-center">
        <Tool icon={tb.rotate} name="Rotate" />
        <button type="button" aria-label="Rotate options" className="flex w-2 justify-center"><Caret /></button>
      </span>
      <Tool icon={tb.pan} name="Pan" />
      <Tool icon={tb.zoom} name="Zoom" />
      <Tool icon={tb.zoomIn} name="Box zoom" />
      <Tool icon={tb.fit} name="Zoom to fit" />
      <Tool icon={tb.fitSel} name="Zoom to selection" />
      <Tool icon={tb.zoom} name="Magnifier" />
      <Sep />
      <span className="w-[39px] pl-[3px]">Select</span>
      <ToolMenu icon={tb.mode} label="Mode" w="w-[66px]" />
      <Tool icon={tb.smart} name="Smart select" on />
      <span className="ml-px flex items-center">
        <Tool icon={<Box3 dot />} name="Vertex" />
        <Tool icon={<Box3 top="#17c32b" />} name="Edge" />
        <Tool icon={<Box3 top="#00e400" />} name="Face" />
        <Tool icon={<Box3 top="#00e400" front="#00e400" />} name="Body" />
        <Tool icon={<Box3 dot mesh="#5b9df0" />} name="Node" />
        <Tool
          icon={elementFaces ? <Box3 top="#17c32b" mesh="#5b9df0" /> : <Box3 c="#8a8a8a" mesh="#b0b0b0" />}
          name="Element face"
        />
        <Tool icon={<Box3 c="#8a8a8a" front="#ddd" mesh="#a5a5a5" />} name="Element" />
        <Tool icon={tb.xyz} name="Hit point" />
        <Tool icon={tb.id100} name="Select by ID" />
        <Tool icon={tb.abcOff} name="Label" />
      </span>
      <Sep />
      <ToolMenu icon={tb.clipboard} label="Clipboard" w="w-[84px]" />
      <button type="button" className="w-[60px] pl-[2px] text-center">[ Empty ]</button>
      <Sep />
      <ToolMenu icon={tb.extend} label="Extend" w="w-[73px]" />
      <ToolMenu icon={tb.selectBy} label="Select By" w="w-[84px]" />
      <ToolMenu icon={tb.convert} label="Convert" w="w-[76px]" />
      <span className="mt-[11px] ml-[3px]"><Caret className="text-black" /></span>
    </div>
  );
}

/* ---------- 3D view ---------- */

function Brand() {
  return (
    <div className="absolute top-0 right-0 flex flex-col items-end pr-[3px] font-['Open_Sans',sans-serif] text-white">
      <div className="flex h-12 items-start pr-1 text-[35px] leading-[48px] font-bold">
        <Svg w={33} h={37}>
          <path d="M0 36L11 9h9L9 36z" fill="#fff" />
          <path d="M18 14l3-5 11 27h-9l-6-16z" fill="#fff" />
        </Svg>
        nsys
      </div>
      <div className="h-[28px] text-[18px] leading-[10px] font-bold">2022 R2</div>
      <div className="pr-5 text-[19px] leading-[10px] font-bold">STUDENT</div>
    </div>
  );
}

function Rod() {
  return (
    <svg width="620" height="240" viewBox="850 690 620 240" fill="none" aria-label="Rod geometry" className="absolute top-[313px] left-[467px]">
      <defs>
        <linearGradient id="rod" gradientUnits="userSpaceOnUse" x1="870" y1="876" x2="880" y2="908">
          <stop offset="0" stopColor="#8f8f8f" />
          <stop offset=".1" stopColor="#b0b0b0" />
          <stop offset=".32" stopColor="#c2c2c2" />
          <stop offset=".46" stopColor="#f3f3f3" />
          <stop offset=".6" stopColor="#b5b5b5" />
          <stop offset=".82" stopColor="#858585" />
          <stop offset="1" stopColor="#444" />
        </linearGradient>
      </defs>
      <path d="M870 876L1424 703C1432 704 1438 716 1438 724C1438 731 1436 735 1433 737L880 909z" fill="url(#rod)" />
      <ellipse cx="874.500" cy="893" rx="9.500" ry="17" transform="rotate(-13 874.500 893)" fill="#4f0e10" />
      <path d="M909 865.500h17.500l3 9-3 9H909z" stroke="#111" />
      <path d="M1025.500 850v13M1019 856.500h12" stroke="#7b93d8" />
    </svg>
  );
}

function Triad() {
  return (
    <svg width="190" height="160" viewBox="1730 1060 190 160" fill="none" aria-label="Axis triad" className="absolute right-0 bottom-[14px]">
      <defs>
        <radialGradient id="hub" cx=".5" cy=".35" r=".7">
          <stop offset="0" stopColor="#20d8d8" />
          <stop offset="1" stopColor="#006a6a" />
        </radialGradient>
        <linearGradient id="zcone" x1="0" x2="0" y1="0" y2="1">
          <stop offset="0" stopColor="#0000d0" />
          <stop offset="1" stopColor="#000040" />
        </linearGradient>
      </defs>
      <circle cx="1812" cy="1131.500" r="9" fill="url(#hub)" />
      <path d="M1808 1131L1772 1097" stroke="#a80000" strokeWidth="5" />
      <path d="M1807 1130L1772 1096" stroke="#e00000" strokeWidth="1.500" />
      <path d="M1758 1083l20 6-1 9-9 4-4-1z" fill="#900000" />
      <ellipse cx="1771" cy="1096" rx="7.500" ry="4" transform="rotate(-42 1771 1096)" fill="#b00000" />
      <path d="M1809 1131L1864 1115" stroke="#0a7a0a" strokeWidth="5" />
      <path d="M1809 1130L1864 1114" stroke="#10a810" strokeWidth="1.500" />
      <path d="M1879 1110l-20-3-1 12 6 4z" fill="#0a8a0a" />
      <ellipse cx="1861" cy="1115" rx="3.500" ry="8" transform="rotate(-16 1861 1115)" fill="#065006" />
      <path d="M1864 1114L1858 1116" stroke="#10a810" strokeWidth="4" />
      <path d="M1808 1132L1800 1184" stroke="#000080" strokeWidth="5" />
      <path d="M1796 1201l-5-19h17z" fill="url(#zcone)" />
      <ellipse cx="1799" cy="1183" rx="8.500" ry="4.500" fill="#0000c8" />
      <path d="M1801 1176l-1 8" stroke="#000080" strokeWidth="5" />
      <g fontFamily="Open Sans, sans-serif" fontSize="12" textAnchor="middle">
        <text x="1753" y="1077" fill="#f00000">X</text>
        <text x="1893" y="1106" fill="#10a010">Y</text>
        <text x="1796" y="1213" fill="#0000e0">Z</text>
      </g>
    </svg>
  );
}

function ScaleBar() {
  return (
    <div className="absolute bottom-[17px] left-1/2 -ml-[243px] w-[484px] text-[11px] leading-[18px] text-black">
      <div className="grid grid-cols-3 leading-[14px]">
        <span className="-ml-[11px]">0.00</span>
        <span className="text-center">350.00</span>
        <span className="-mr-[48px] text-right">700.00 (mm)</span>
      </div>
      <div className="grid h-4 grid-cols-4 border border-black">
        <span className="bg-black" />
        <span />
        <span className="bg-black" />
        <span />
      </div>
      <div className="mt-2 grid grid-cols-2 text-center">
        <span>175.00</span>
        <span>525.00</span>
      </div>
    </div>
  );
}

/* ---------- application window ---------- */

type Tab = { label: string; w: string };

function AppWindow({
  id,
  tabs,
  contextW,
  focused,
  tree,
  remoteOn,
  sky,
  caption,
  scene,
}: {
  id: string;
  tabs: Tab[];
  contextW: string;
  focused: boolean;
  tree: Node[];
  remoteOn: boolean;
  sky: string;
  caption: React.ReactNode;
  scene: boolean;
}) {
  return (
    <section className="flex min-h-0 flex-1 flex-col bg-[#eeeef0] text-[11px] text-[#1e1e1e]">
      <header className="grid h-[26px] shrink-0 grid-cols-[1fr_auto_1fr]">
        <div className="flex">
          <div className="flex w-[123px] shrink-0 items-start gap-[6px] pt-[3px] pl-2">
            <Gears />
            <span className="h-5 w-px bg-[#ccc]" />
            <button type="button" aria-label="Save">
              <Svg w={15} h={15}>
                <path d="M1 1h13v13H1zM4 1v6h7V1M4 14v-4h6v4M6.500 12v2" stroke="#4a90e2" strokeWidth="1.300" />
              </Svg>
            </button>
            <button type="button" aria-label="Customize toolbar" className="mt-1">
              <Svg w={8} h={7}>
                <path d="M0 1h8" stroke="#666" strokeWidth="1.200" />
                <path d="M0 3h8L4 7z" fill="#666" />
              </Svg>
            </button>
          </div>
          <div className={"flex shrink-0 items-center justify-center border-t-4 border-[#2b579a] bg-[#d5e1f2] text-[#3b69b5] " + contextW}>Context</div>
        </div>
        <h1 className="pt-1 leading-[20px] text-[#555]">Systems A,B - Mechanical [Ansys Mechanical Enterprise]</h1>
        <div className="flex items-start justify-end gap-[23px] pt-[8px] pr-3">
          <button type="button" aria-label="Minimize"><Svg w={10} h={12}><path d="M1 7.500h8" stroke="#1e1e1e" strokeWidth="2" /></Svg></button>
          <button type="button" aria-label="Restore">
            <Svg w={11} h={12}>
              <path d="M4 4V2h6v6H8" stroke="#1e1e1e" strokeWidth="1.200" />
              <path d="M1 5h6v6H1zM1 6h6" stroke="#1e1e1e" strokeWidth="1.400" />
            </Svg>
          </button>
          <button type="button" aria-label="Close"><Svg w={11} h={11}><path d="M1 1l9 9M10 1l-9 9" stroke="#1e1e1e" strokeWidth="2" /></Svg></button>
        </div>
      </header>

      <nav className="flex h-[24px] shrink-0 border-b border-[#c6c6c6]">
        <button type="button" className="h-[23px] w-14 bg-[#0173c7] text-white">File</button>
        <button type="button" className="ml-2 h-6 w-[57px] border border-b-0 border-[#c6c6c6] bg-[#fbfbfb] pt-px">Home</button>
        {tabs.map((t) => (
          <button key={t.label} type="button" className={"ml-[2px] pt-[2px] " + t.w}>{t.label}</button>
        ))}
        <div className="ml-auto flex items-start pr-1">
          <input aria-label="Quick Launch" type="text" placeholder="Quick Launch" className="mt-px h-[21px] w-[159px] border border-[#ccceDB] bg-white pl-[3px] placeholder:text-[#999]" />
          <button type="button" aria-label="Collapse ribbon" className="mt-2 ml-[5px]"><Svg w={12} h={7}><path d="M1 6l5-4.500L11 6" stroke={G} strokeWidth="2" /></Svg></button>
          <button type="button" aria-label="Options" className="mt-1 ml-2">
            <Svg w={15} h={15}>
              <path d="M1 3l11-2 2 11-11 2z" fill="#fff" stroke={K} strokeWidth="1.200" />
              <path d="M4 7l3 4 5-9" stroke={G} strokeWidth="1.800" />
            </Svg>
          </button>
          <button type="button" aria-label="Help" className="mt-1 ml-[6px] flex items-center">
            <span className="grid size-[14px] place-items-center rounded-full bg-[#5b9df0] text-[11px] leading-[14px] font-bold text-white">?</span>
            <Caret className="text-[#1e1e1e]" />
          </button>
        </div>
      </nav>

      <Ribbon remoteOn={remoteOn} id={id} />

      <div className="flex min-h-0 flex-1">
        <aside className="flex w-[379px] shrink-0 flex-col">
          <PanelHeader title="Outline" active={focused} />
          <div className="flex h-[27px] shrink-0 items-center bg-[#eeeef0] pl-[10px]">
            <Grip />
            <div className="ml-[7px] grid w-[100px] items-center">
              <select aria-label="Filter by" className="col-start-1 row-start-1 h-[22px] appearance-none border border-[#ccceDB] bg-white pl-[3px]">
                <option>Name</option>
              </select>
              <span className="pointer-events-none col-start-1 row-start-1 mr-1 justify-self-end"><Caret /></span>
            </div>
            <input aria-label="Search Outline" type="text" placeholder="Search Outline" className="h-[22px] w-[90px] border border-[#ccceDB] bg-white pl-[3px] placeholder:text-[#999]" />
            <button type="button" aria-label="Expand search" className="ml-[5px]"><Svg w={12} h={8}><path d="M1 1l5 5 5-5" stroke={G} strokeWidth="2" /></Svg></button>
            <span className="mt-2 ml-[7px]"><Caret className="text-black" /></span>
          </div>
          <Tree items={tree} />
          {scene && <Details />}
        </aside>
        <div className="ml-1 flex min-w-0 flex-1 flex-col">
          <GraphicsToolbar elementFaces={remoteOn} />
          <main className={"relative flex-1 overflow-hidden bg-linear-to-b " + sky}>
            <div className="pt-[14px] pl-[14px] leading-[15px] text-black">{caption}</div>
            <Brand />
            {scene && (
              <>
                <Rod />
                <Triad />
                <ScaleBar />
              </>
            )}
          </main>
        </div>
      </div>
    </section>
  );
}

/* ---------- taskbar ---------- */

const apps: { name: string; art: React.ReactNode; open?: boolean; active?: boolean }[] = [
  {
    name: "Microsoft Edge",
    art: (
      <Svg w={24} h={24}>
        <defs>
          <linearGradient id="edge" x1="0" y1="1" x2="1" y2="0">
            <stop offset="0" stopColor="#0c59a4" />
            <stop offset=".5" stopColor="#1b9de2" />
            <stop offset="1" stopColor="#5ade6a" />
          </linearGradient>
        </defs>
        <circle cx="12" cy="12" r="12" fill="url(#edge)" />
        <path d="M9 13c0 5 6 8 13 4-4 6-11 8-15 4-3-4-1-9 2-8z" fill="#0a4a94" />
        <path d="M10 12c0-3 5-3 5 0 0 2-1 3 1 4s6 0 8-3v4c-4 2-14 2-14-5z" fill="#1f1f1e" />
      </Svg>
    ),
  },
  {
    name: "File Explorer",
    art: (
      <Svg w={24} h={24}>
        <path d="M1 3h9l2 2h11v16H1z" fill="#e8a317" />
        <path d="M1 7h22v14H1z" fill="#fcd462" />
        <path d="M5 21v-8h14v8h-4v-4H9v4z" fill="#3a96dd" />
      </Svg>
    ),
  },
  {
    name: "Microsoft Store",
    art: (
      <Svg w={24} h={24}>
        <path d="M7 7V2h10v5" stroke="#1e90e8" strokeWidth="2" />
        <path d="M1 6h22v15c0 2-1 3-3 3H4c-2 0-3-1-3-3z" fill="#f4f4f4" />
        <path d="M8 10h4v4H8z" fill="#f25022" />
        <path d="M13 10h4v4h-4z" fill="#7fba00" />
        <path d="M8 15h4v4H8z" fill="#00a4ef" />
        <path d="M13 15h4v4h-4z" fill="#ffb900" />
      </Svg>
    ),
  },
  {
    name: "Mail",
    art: (
      <Svg w={24} h={24}>
        <path d="M0 8L12 1l12 7v3H0z" fill="#1267b4" />
        <path d="M2 8h20v8H2z" fill="#f4f4f4" />
        <path d="M0 8l12 8 12-8v15H0z" fill="#2ba3ea" />
        <path d="M24 8L7 23h17z" fill="#50c8f5" />
      </Svg>
    ),
  },
  {
    name: "SpaceClaim",
    art: (
      <Svg w={24} h={24}>
        <rect width="24" height="24" fill="#000" />
        <path d="M7 2l12 6.500L7 14zM10 5v6l6-3z" stroke="#f0a818" strokeWidth="1.800" />
        <text x="12" y="23" fontSize="9" fontWeight="bold" textAnchor="middle" fontFamily="Open Sans, sans-serif" fill="#fff">SC</text>
      </Svg>
    ),
  },
  {
    name: "Firefox",
    open: true,
    art: (
      <Svg w={24} h={24}>
        <defs>
          <linearGradient id="fox" x1=".8" y1="0" x2=".3" y2="1">
            <stop offset="0" stopColor="#ffe226" />
            <stop offset=".5" stopColor="#ff7139" />
            <stop offset="1" stopColor="#e31587" />
          </linearGradient>
        </defs>
        <path d="M4 5l2 2c1-1 3-1 4-1l5-5c1 3 3 4 4 6l1-2c3 4 4 9 1 13-4 6-13 7-18 1C0 15 1 9 4 5z" fill="url(#fox)" />
        <circle cx="12" cy="12.500" r="4.500" fill="#7542e5" />
        <path d="M5 10c3-2 6-1 7 1-3 0-3 2-6 2z" fill="#ff9a3c" />
      </Svg>
    ),
  },
  {
    name: "Workbench",
    open: true,
    art: (
      <Svg w={24} h={24}>
        <rect width="24" height="24" fill="#000" />
        <path d="M12 1l4 2v4l-4 2-4-2V3zM8 3l4 2 4-2M8 7l4 2v4l-4 2-4-2V9zM16 7l4 2v4l-4 2-4-2V9zM4 9l4 2 4-2 4 2 4-2M8 11v4M16 11v4" stroke="#f0a818" strokeWidth="1.200" />
        <text x="12" y="23" fontSize="9" fontWeight="bold" textAnchor="middle" fontFamily="Open Sans, sans-serif" fill="#fff">WB</text>
      </Svg>
    ),
  },
  {
    name: "Mechanical",
    open: true,
    active: true,
    art: (
      <Svg w={24} h={24}>
        <rect width="24" height="24" fill="#000" />
        <circle cx="9" cy="10" r="3.500" stroke="#f0a818" strokeWidth="1.500" />
        <circle cx="9" cy="10" r="5" stroke="#f0a818" strokeWidth="1.300" strokeDasharray="2 2" />
        <circle cx="16.500" cy="4.500" r="2.200" stroke="#f0a818" strokeWidth="1.300" />
        <circle cx="16.500" cy="4.500" r="3.500" stroke="#f0a818" strokeDasharray="1.500 1.500" />
        <text x="12" y="23" fontSize="9" fontWeight="bold" textAnchor="middle" fontFamily="Open Sans, sans-serif" fill="#fff">M</text>
      </Svg>
    ),
  },
  {
    name: "Paint",
    open: true,
    art: (
      <Svg w={24} h={24}>
        <path d="M1 15C2 7 11 2 18 5c6 4 4 15-5 17-4 1-4-3-6-4s-7 1-6-3z" fill="#cfe3f2" stroke="#8fb2cc" />
        <circle cx="6" cy="13" r="2" fill="#e04040" />
        <circle cx="9" cy="8.500" r="2" fill="#e8a020" />
        <circle cx="14" cy="7" r="2" fill="#40b040" />
        <circle cx="11" cy="17" r="2" fill="#2a70d0" />
        <path d="M21 4L15 22" stroke="#c47a28" strokeWidth="2.500" />
        <path d="M19 6l1-5 4 0-2 6z" fill="#d8a868" />
      </Svg>
    ),
  },
];

function Taskbar() {
  return (
    <footer className="flex h-10 shrink-0 items-stretch bg-[#1f1f1e] text-white">
      <button type="button" aria-label="Start" className="flex w-12 shrink-0 items-center justify-center">
        <Svg w={16} h={16}>
          <path d="M0 2.500l7-1v6H0zM8 1.300L16 0v7.500H8zM0 8.500h7v6l-7-1zM8 8.500h8V16l-8-1.200z" fill="#fff" />
        </Svg>
      </button>
      <label className="flex w-[344px] shrink-0 items-center gap-[11px] border border-[#c0c0c0] bg-[#f2f2f2] pl-[11px]">
        <Svg w={17} h={17}>
          <circle cx="10.500" cy="6" r="5" stroke="#222" strokeWidth="1.300" />
          <path d="M7 10l-6 6" stroke="#222" strokeWidth="1.300" />
        </Svg>
        <input type="text" aria-label="Search" placeholder="Type here to search" className="min-w-0 flex-1 bg-transparent text-[14px] placeholder:text-[#444]" />
      </label>
      <button type="button" aria-label="Task view" className="flex w-12 shrink-0 items-center justify-center">
        <Svg w={17} h={16}>
          <path d="M1 1v2h10V1M1 15v-2h10v2M1 5h10v6H1zM15 1v4M15 9v6" stroke="#fff" strokeWidth="1.200" />
          <path d="M13.500 5h3v3h-3z" fill="#fff" />
        </Svg>
      </button>
      <div className="flex gap-px pl-[3px]">
        {apps.map((a) => (
          <button key={a.name} type="button" aria-label={a.name} className={"flex w-12 flex-col items-center justify-end " + (a.active ? "bg-[#4d4d4b]" : "")}>
            <span className="flex h-[30px] items-start">{a.art}</span>
            <span className={"h-[2px] " + (a.active ? "w-12 " : "w-10 ") + (a.open ? "bg-[#76b9ed]" : "")} />
          </button>
        ))}
      </div>
      <div className="ml-auto flex items-center">
        <button type="button" className="flex items-center text-left text-[13px]">
          <Svg w={22} h={22} className="mr-2">
            <circle cx="10" cy="10" r="10" fill="#f5a623" />
            <path d="M4 22a4 4 0 0 1 0-8c1-5 9-6 11-1 8-1 9 9 3 9z" fill="#cfe0fb" />
          </Svg>
          <span className="w-[38px]">29°C</span>
          <span className="w-[92px]">Partly sunny</span>
        </button>
        <button type="button" aria-label="Hidden icons" className="mx-[7px]"><Svg w={12} h={8}><path d="M1 7l5-5 5 5" stroke="#fff" strokeWidth="1.300" /></Svg></button>
        <button type="button" aria-label="Network" className="ml-[3px]">
          <Svg w={17} h={14}><path d="M4 2h12v8H4M8 13h6M11 10v3M1 1h4v4H1zM3 5v8h4" stroke="#fff" strokeWidth="1.200" /></Svg>
        </button>
        <button type="button" aria-label="Volume" className="ml-[6px]">
          <Svg w={18} h={14}><path d="M1 5h2l4-4v12L3 9H1z" stroke="#fff" strokeWidth="1.200" /><path d="M9 5c1 1 1 3 0 4M11 3c2 2 2 6 0 8" stroke="#ddd" /><path d="M14 1c3 3 3 9 0 12" stroke="#888" /></Svg>
        </button>
        <button type="button" className="w-[70px] text-center text-[11px] leading-[18px]">
          <span className="block">2:26 PM</span>
          <span className="block">12/21/2022</span>
        </button>
        <button type="button" aria-label="3 notifications" className="ml-[9px]">
          <Svg w={28} h={24}>
            <path d="M0 1h16v12H9l-4 4v-4H0z" fill="#fff" />
            <path d="M3 4.500h10M3 7h10M3 9.500h10" stroke="#1f1f1e" strokeWidth="1.200" />
            <circle cx="15.500" cy="15" r="7.500" fill="#333" stroke="#999" />
            <text x="15.500" y="19" fontSize="11" textAnchor="middle" fontFamily="Open Sans, sans-serif" fill="#fff">3</text>
          </Svg>
        </button>
        <span className="mr-1 ml-2 h-10 w-px bg-[#888]" />
      </div>
    </footer>
  );
}

const baseTabs = (first: Tab): Tab[] => [
  first,
  { label: "Display", w: "w-[64px]" },
  { label: "Selection", w: "w-[73px]" },
  { label: "Automation", w: "w-[89px]" },
  { label: "Add-ons", w: "w-[70px]" },
];

export default function App() {
  return (
    <div className="flex min-h-screen flex-col bg-white pb-1 font-['Open_Sans','Noto_Sans',sans-serif]">
      <div className="flex h-[214px] shrink-0 overflow-hidden">
        <AppWindow
          id="back"
          tabs={baseTabs({ label: "Environment", w: "w-[92px]" })}
          contextW="w-[92px]"
          focused={false}
          tree={nodes.slice(0, 2)}
          remoteOn={false}
          sky="from-[#6b8bdd] to-[#7492e0]"
          scene={false}
          caption={
            <>
              <p className="font-bold">B: Harmonic Response</p>
              <p>Rotating Force</p>
              <p>Frequency: 0. Hz</p>
            </>
          }
        />
      </div>
      <div className="flex flex-1">
        <AppWindow
          id="front"
          tabs={baseTabs({ label: "Remote Points", w: "w-[101px]" })}
          contextW="w-[101px]"
          focused
          tree={nodes}
          remoteOn
          sky="from-[#6b8bdd] to-white"
          scene
          caption={
            <>
              <p className="font-bold">Remote Point</p>
              <p>12/21/2022 2:26 PM</p>
              <p className="mt-[14px] flex items-center gap-[6px]">
                <span className="size-4 border border-black bg-[#ff3333]" />
                Remote Point
              </p>
            </>
          }
        />
      </div>
      <div className="flex h-5 shrink-0 items-center justify-end bg-[#007acc] pt-px pr-[7px] text-[11px] text-white">
        <button type="button" className="flex items-center gap-[2px]">
          <Svg w={16} h={16}>
            <path d="M1 4h14v7H7l-3 4v-4H1z" fill="#f7d774" />
            <path d="M9 0l6 10H3z" fill="#d8201c" />
            <path d="M9 3v4M9 8v1.200" stroke="#fff" strokeWidth="1.400" />
          </Svg>
          <span className="w-[78px] text-left">2 Messages</span>
        </button>
        <span className="w-[89px]">No Selection</span>
        <button type="button" className="flex items-center gap-[6px]">
          <Svg w={8} h={4}><path d="M0 4h8L4 0z" fill="#fff" /></Svg>
          <span className="w-[173px] text-left">Metric (mm, kg, N, s, mV, mA)</span>
        </button>
        <span className="w-[55px]">Degrees</span>
        <span className="w-[38px]">rad/s</span>
        <span className="w-[38px]">Celsius</span>
      </div>
      <Taskbar />
    </div>
  );
}
